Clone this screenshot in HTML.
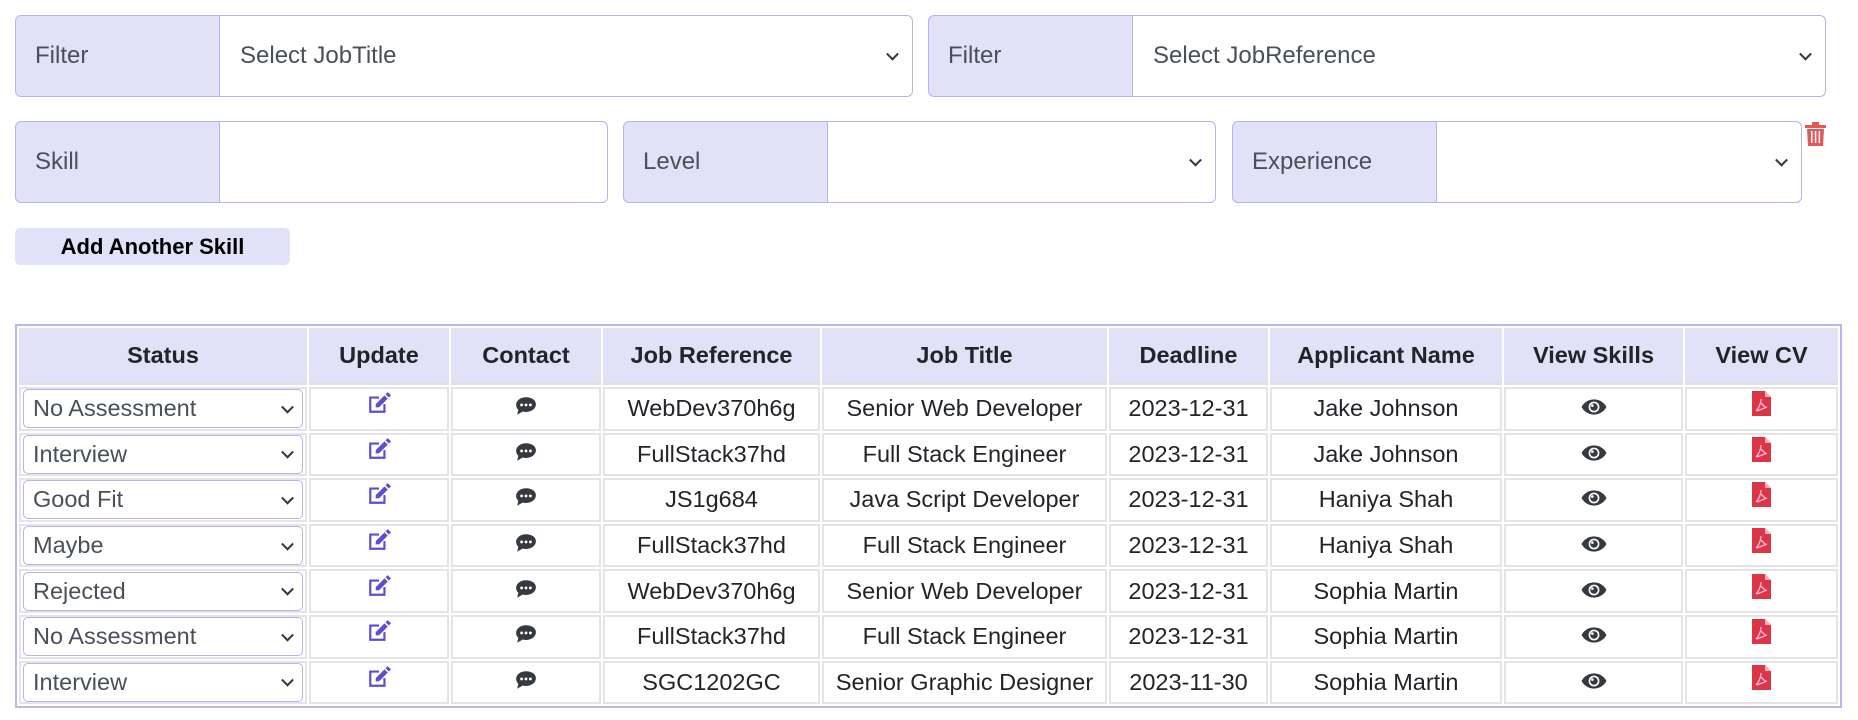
<!DOCTYPE html>
<html><head><meta charset="utf-8"><style>
body{margin:0;background:#fff;font-family:"Liberation Sans",Arial,sans-serif;color:#212529;width:1858px;height:720px;overflow:hidden;position:relative}
.grp{position:absolute;display:flex;height:82px;box-sizing:border-box}
.lab{background:#e1e1f8;border:1px solid #b3b3ee;border-radius:6px 0 0 6px;box-sizing:border-box;display:flex;align-items:center;padding-left:19px;font-size:24px;color:#495057}
.inp{flex:1;border:1px solid #b3b3ee;border-radius:0 6px 6px 0;margin-left:-1px;box-sizing:border-box;display:flex;align-items:center;padding-left:20px;font-size:24px;color:#495057;position:relative;background:#fff}
.chev{position:absolute;right:15px;top:50%;width:7px;height:7px;border-right:2px solid #343a40;border-bottom:2px solid #343a40;transform:translateY(-70%) rotate(45deg)}
.btn{position:absolute;left:15px;top:228px;width:275px;height:37px;background:#e1e1f8;border-radius:5px;font-weight:bold;font-size:22px;text-align:center;line-height:37px;color:#000}
table{position:absolute;left:15px;top:324px;width:1827px;border:2px solid #b8b8ee;border-spacing:2px;border-collapse:separate}
th{background:#e1e1f8;height:54px;font-size:23.5px;font-weight:bold;border-bottom:3px solid #dee2e6;padding:0}
td{border:2px solid #e4e4e8;height:39.6px;text-align:center;font-size:23.5px;padding:0}
td.s{padding:0 2px;text-align:left}
.sel{height:37px;border:1px solid #b3b3ee;border-radius:5px;position:relative;display:flex;align-items:center;padding-left:9px;color:#495057;font-size:23.5px}
.sel .chev{right:10px}
</style></head><body>
<div class="grp" style="left:15px;top:15px;width:898px"><div class="lab" style="width:205px">Filter</div><div class="inp">Select JobTitle<span class="chev"></span></div></div>
<div class="grp" style="left:928px;top:15px;width:898px"><div class="lab" style="width:205px">Filter</div><div class="inp">Select JobReference<span class="chev"></span></div></div>
<div class="grp" style="left:15px;top:121px;width:593px"><div class="lab" style="width:205px">Skill</div><div class="inp"></div></div>
<div class="grp" style="left:623px;top:121px;width:593px"><div class="lab" style="width:205px">Level</div><div class="inp"><span class="chev"></span></div></div>
<div class="grp" style="left:1232px;top:121px;width:570px"><div class="lab" style="width:205px">Experience</div><div class="inp"><span class="chev"></span></div></div>
<svg style="position:absolute;left:1805px;top:122px" width="21" height="25" viewBox="0 0 21 25"><rect x="0" y="3" width="21" height="3" fill="#e05a5a"/><rect x="7" y="0" width="7" height="4" fill="#e05a5a"/><path d="M2 7h17l-1 17H3z" fill="#e05a5a"/><rect x="6" y="9" width="1.5" height="12" fill="#fff"/><rect x="9.8" y="9" width="1.5" height="12" fill="#fff"/><rect x="13.6" y="9" width="1.5" height="12" fill="#fff"/></svg>
<div class="btn">Add Another Skill</div>
<table>
<colgroup><col style="width:288px"><col style="width:140px"><col style="width:150px"><col style="width:217px"><col style="width:285px"><col style="width:159px"><col style="width:232px"><col style="width:179px"><col></colgroup>
<tr><th>Status</th><th>Update</th><th>Contact</th><th>Job Reference</th><th>Job Title</th><th>Deadline</th><th>Applicant Name</th><th>View Skills</th><th>View CV</th></tr>
</table>
<script>
var rows=[["No Assessment","WebDev370h6g","Senior Web Developer","2023-12-31","Jake Johnson"],["Interview","FullStack37hd","Full Stack Engineer","2023-12-31","Jake Johnson"],["Good Fit","JS1g684","Java Script Developer","2023-12-31","Haniya Shah"],["Maybe","FullStack37hd","Full Stack Engineer","2023-12-31","Haniya Shah"],["Rejected","WebDev370h6g","Senior Web Developer","2023-12-31","Sophia Martin"],["No Assessment","FullStack37hd","Full Stack Engineer","2023-12-31","Sophia Martin"],["Interview","SGC1202GC","Senior Graphic Designer","2023-11-30","Sophia Martin"]];
var ed='<svg width="24" height="24" viewBox="0 0 22 22" style="vertical-align:top;margin-top:-4px"><path d="M2 5h9v2H4v11h11v-6h2v8H2z" fill="#5a4fcf"/><path d="M8 12l8-8 3 3-8 8H8z" fill="#5a4fcf"/><path d="M17 3l2-2 3 3-2 2z" fill="#5a4fcf"/></svg>';
var ch='<svg width="22" height="20" viewBox="0 0 20 18"><path d="M10 1C5 1 1 4 1 8c0 2 1 3.5 2 4.5L2 17l5-3c1 .3 2 .4 3 .4 5 0 9-3 9-7S15 1 10 1z" fill="#343a40"/><circle cx="6" cy="8" r="1.3" fill="#fff"/><circle cx="10" cy="8" r="1.3" fill="#fff"/><circle cx="14" cy="8" r="1.3" fill="#fff"/></svg>';
var ey='<svg width="26" height="18" viewBox="0 0 24 16"><path d="M12 1C6 1 2 5 0.5 8 2 11 6 15 12 15s10-4 11.5-7C22 5 18 1 12 1z" fill="#343a40"/><circle cx="12" cy="8" r="5" fill="#fff"/><circle cx="12" cy="8" r="3.5" fill="#343a40"/><circle cx="10.5" cy="6.7" r="1.2" fill="#fff"/></svg>';
var pdf='<svg width="19" height="25" viewBox="0 0 19 25" style="vertical-align:top;margin-top:-4px"><path d="M0 0h13l6 6v19H0z" fill="#dc3545"/><path d="M13 0v6h6z" fill="#f3b0b8"/><path d="M4 20c3-3 5-8 5-12M5 20l10-4M9 12l5 5" stroke="#fbd" stroke-width="1.3" fill="none"/></svg>';
var h='';rows.forEach(function(r){h+='<tr><td class="s"><div class="sel">'+r[0]+'<span class="chev"></span></div></td><td>'+ed+'</td><td>'+ch+'</td><td>'+r[1]+'</td><td>'+r[2]+'</td><td>'+r[3]+'</td><td>'+r[4]+'</td><td>'+ey+'</td><td>'+pdf+'</td></tr>';});
document.querySelector('table').insertAdjacentHTML('beforeend',h);
</script>
</body></html>
